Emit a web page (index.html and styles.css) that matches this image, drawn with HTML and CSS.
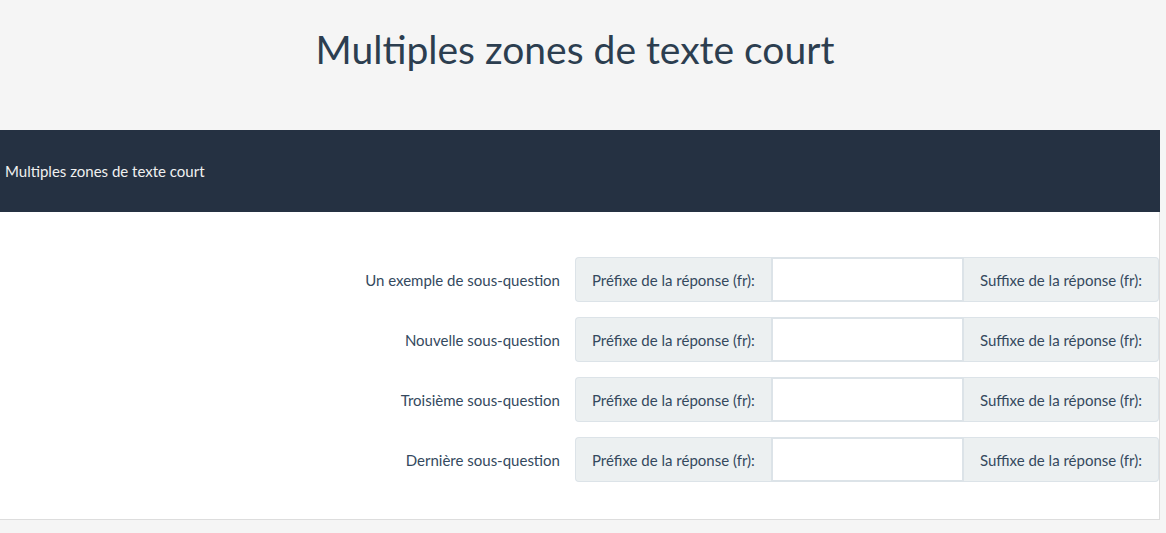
FILE: index.html
```html
<!DOCTYPE html>
<html lang="fr">
<head>
  <meta charset="UTF-8">
  <meta name="viewport" content="width=device-width, initial-scale=1.0">
  <title>Multiples zones de texte court</title>
  <link rel="stylesheet" href="styles.css">
</head>
<body>

<h1 class="page-title">Multiples zones de texte court</h1>

<div class="card">
  <div class="card-header">Multiples zones de texte court</div>
  <div class="card-body">
    <div class="row">
      <label class="row-label" for="q1">Un exemple de sous-question</label>
      <div class="input-group">
        <span class="addon addon-left">Préfixe de la réponse (fr):</span>
        <input type="text" id="q1" class="field">
        <span class="addon addon-right">Suffixe de la réponse (fr):</span>
      </div>
    </div>
    <div class="row">
      <label class="row-label" for="q2">Nouvelle sous-question</label>
      <div class="input-group">
        <span class="addon addon-left">Préfixe de la réponse (fr):</span>
        <input type="text" id="q2" class="field">
        <span class="addon addon-right">Suffixe de la réponse (fr):</span>
      </div>
    </div>
    <div class="row">
      <label class="row-label" for="q3">Troisième sous-question</label>
      <div class="input-group">
        <span class="addon addon-left">Préfixe de la réponse (fr):</span>
        <input type="text" id="q3" class="field">
        <span class="addon addon-right">Suffixe de la réponse (fr):</span>
      </div>
    </div>
    <div class="row">
      <label class="row-label" for="q4">Dernière sous-question</label>
      <div class="input-group">
        <span class="addon addon-left">Préfixe de la réponse (fr):</span>
        <input type="text" id="q4" class="field">
        <span class="addon addon-right">Suffixe de la réponse (fr):</span>
      </div>
    </div>
  </div>
</div>

</body>
</html>
```

FILE: styles.css
```css
body {
  font-family: Lato, "Open Sans", sans-serif;
  margin: 0;
  background-color: #f5f5f5;
  color: #2c3e50;
}

.page-title {
  margin: 0;
  width: 1150px;
  height: 130px;
  padding-top: 24px;
  box-sizing: border-box;
  text-align: center;
  font-size: 39px;
  font-weight: 400;
  line-height: 50px;
  color: #2c3e50;
}

.card {
  width: 1160px;
  background-color: #fff;
}

.card-header {
  height: 82px;
  display: flex;
  align-items: center;
  padding-left: 5px;
  background-color: #253142;
  color: #f0f0f0;
  font-size: 15px;
}

.card-body {
  display: flex;
  flex-direction: column;
  gap: 15px;
  padding: 45px 0 37px;
  border-right: 1px solid #ddd;
  border-bottom: 1px solid #ddd;
}

.row {
  display: flex;
  align-items: center;
}

.row-label {
  width: 560px;
  flex-shrink: 0;
  text-align: right;
  padding-right: 15px;
  font-size: 15px;
  color: #34495e;
}

.input-group {
  display: flex;
  flex: 1;
  min-width: 0;
  height: 45px;
}

.addon {
  display: flex;
  align-items: center;
  flex-shrink: 0;
  padding: 0 16px;
  background-color: #ecf0f1;
  border: 1px solid #dce3e8;
  font-size: 15px;
  color: #34495e;
  white-space: nowrap;
}

.addon-left {
  border-radius: 4px 0 0 4px;
  border-right: none;
}

.addon-right {
  border-radius: 0 4px 4px 0;
  border-left: none;
}

.field {
  flex: 1;
  width: 0;
  min-width: 0;
  margin: 0;
  padding: 0 12px;
  border: 2px solid #dce3e8;
  background-color: #fff;
  font-family: inherit;
  font-size: 15px;
}
```
